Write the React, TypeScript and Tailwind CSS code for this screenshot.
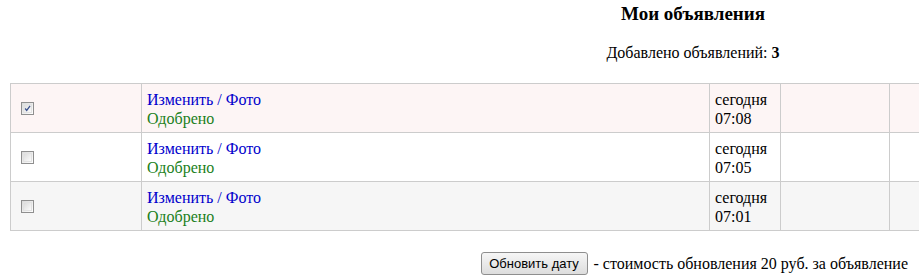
import React from "react";

function Check({ checked }: { checked?: boolean }) {
  return (
    <div className="w-[13px] h-[13px] border border-[#8f8f8f] bg-gradient-to-br from-[#d9d9d9] to-[#ffffff] flex items-center justify-center">
      <div className="w-[9px] h-[9px] border border-[#e2e2e2] bg-gradient-to-br from-[#dcdcdc] to-[#fbfbfb] flex items-center justify-center">
        {checked && (
          <svg width="9" height="9" viewBox="0 0 9 9">
            <path d="M1.5 4.5 L3.5 7 L7.8 1.2" stroke="#3a4f8c" strokeWidth="1.6" fill="none" />
          </svg>
        )}
      </div>
    </div>
  );
}

const rows = [
  { checked: true, bg: "bg-[#fdf5f5]", time: "07:08" },
  { checked: false, bg: "bg-white", time: "07:05" },
  { checked: false, bg: "bg-[#f6f6f6]", time: "07:01" },
];

export default function App() {
  return (
    <div className="w-[919px] h-[280px] overflow-hidden bg-white text-black font-['Liberation_Serif',_'Times_New_Roman',_serif]">
      <div className="w-[1366px] ml-[10px]">
        <div className="pt-[3px] text-center text-[19px] leading-[22px] font-bold">Мои объявления</div>
        <div className="mt-[19px] text-center text-[16px] leading-[18px]">
          Добавлено объявлений: <b>3</b>
        </div>
        <div className="mt-[21px] flex flex-col border-t border-l border-[#cccccc] w-[1000px]">
          {rows.map((r, i) => (
            <div key={i} className={`flex border-b border-[#cccccc] ${r.bg} text-[16px] leading-[19px]`}>
              <div className="w-[131px] border-r border-[#cccccc] flex items-center pl-[10px]">
                <Check checked={r.checked} />
              </div>
              <div className="w-[568px] border-r border-[#cccccc] px-[5px] pt-[6px] pb-[4px]">
                <div className="text-[#0000cc]">Изменить / Фото</div>
                <div className="text-[#1a7f1a]">Одобрено</div>
              </div>
              <div className="w-[71px] border-r border-[#cccccc] px-[5px] pt-[6px] pb-[4px]">
                <div>сегодня</div>
                <div>{r.time}</div>
              </div>
              <div className="w-[109px] border-r border-[#cccccc]"></div>
              <div className="flex-1"></div>
            </div>
          ))}
        </div>
      </div>
      <div className="mt-[21px] flex items-center justify-end pr-[11px]">
        <button className="h-[23px] w-[107px] rounded-[3px] border border-[#8e8e8e] bg-gradient-to-b from-[#f6f6f6] to-[#dddddd] text-[13px] text-black pt-[1px] font-['Liberation_Sans',_Arial,_sans-serif]">
          Обновить дату
        </button>
        <span className="ml-[6px] text-[16px] leading-[18px]">- стоимость обновления 20 руб. за объявление</span>
      </div>
    </div>
  );
}
